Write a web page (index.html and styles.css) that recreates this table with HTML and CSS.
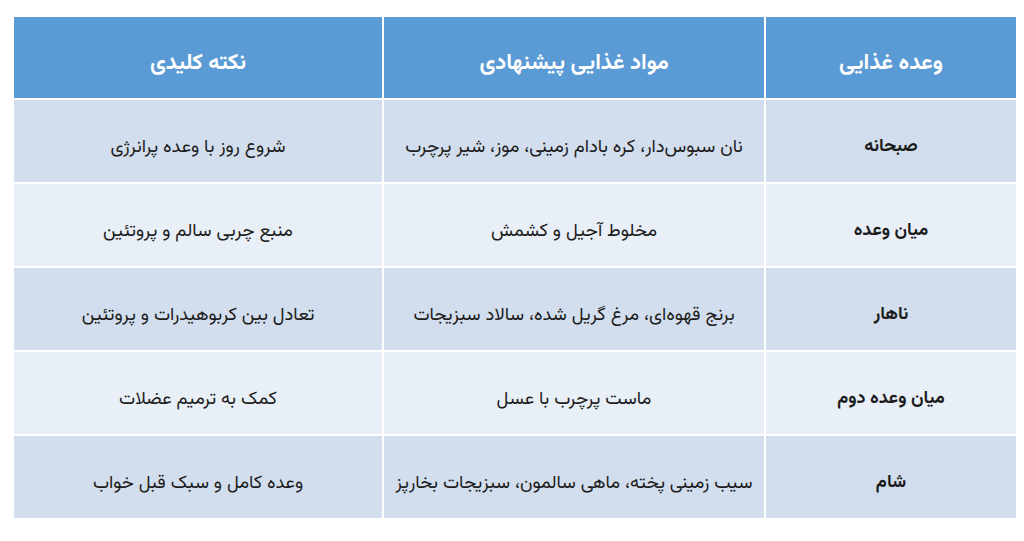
FILE: index.html
```html
<!DOCTYPE html>
<html lang="fa" dir="rtl">
<head>
<meta charset="utf-8">
<link rel="stylesheet" href="styles.css">
</head>
<body>
<div class="meal-table">
  <div class="cell head">وعده غذایی</div>
  <div class="cell head">مواد غذایی پیشنهادی</div>
  <div class="cell head">نکته کلیدی</div>

  <div class="cell odd meal">صبحانه</div>
  <div class="cell odd">نان سبوس‌دار، کره بادام زمینی، موز، شیر پرچرب</div>
  <div class="cell odd">شروع روز با وعده پرانرژی</div>

  <div class="cell even meal">میان وعده</div>
  <div class="cell even">مخلوط آجیل و کشمش</div>
  <div class="cell even">منبع چربی سالم و پروتئین</div>

  <div class="cell odd meal">ناهار</div>
  <div class="cell odd">برنج قهوه‌ای، مرغ گریل شده، سالاد سبزیجات</div>
  <div class="cell odd">تعادل بین کربوهیدرات و پروتئین</div>

  <div class="cell even meal">میان وعده دوم</div>
  <div class="cell even">ماست پرچرب با عسل</div>
  <div class="cell even">کمک به ترمیم عضلات</div>

  <div class="cell odd meal">شام</div>
  <div class="cell odd">سیب زمینی پخته، ماهی سالمون، سبزیجات بخارپز</div>
  <div class="cell odd">وعده کامل و سبک قبل خواب</div>
</div>
</body>
</html>
```

FILE: styles.css
```css
html, body {
  margin: 0;
  padding: 0;
  background: #ffffff;
}
body {
  padding: 17px 8px 0 14px;
  font-family: "Vazirmatn", "Noto Sans Arabic", "DejaVu Sans", "Noto Sans", sans-serif;
}
.meal-table {
  display: grid;
  grid-template-columns: 250px 380px 1fr;
  grid-template-rows: 81px repeat(5, 82px);
  gap: 2px;
}
.cell {
  display: flex;
  align-items: center;
  justify-content: center;
  text-align: center;
  padding-top: 12px;
  box-sizing: border-box;
  color: #1c1c1c;
  font-size: 18.4px;
}
.head {
  background: #5b9bd5;
  color: #ffffff;
  font-size: 22px;
  font-weight: bold;
  padding-top: 12px;
}
.odd { background: #d2deed; }
.even { background: #e9eff7; }
.meal { font-weight: bold; font-size: 18px; }
```
